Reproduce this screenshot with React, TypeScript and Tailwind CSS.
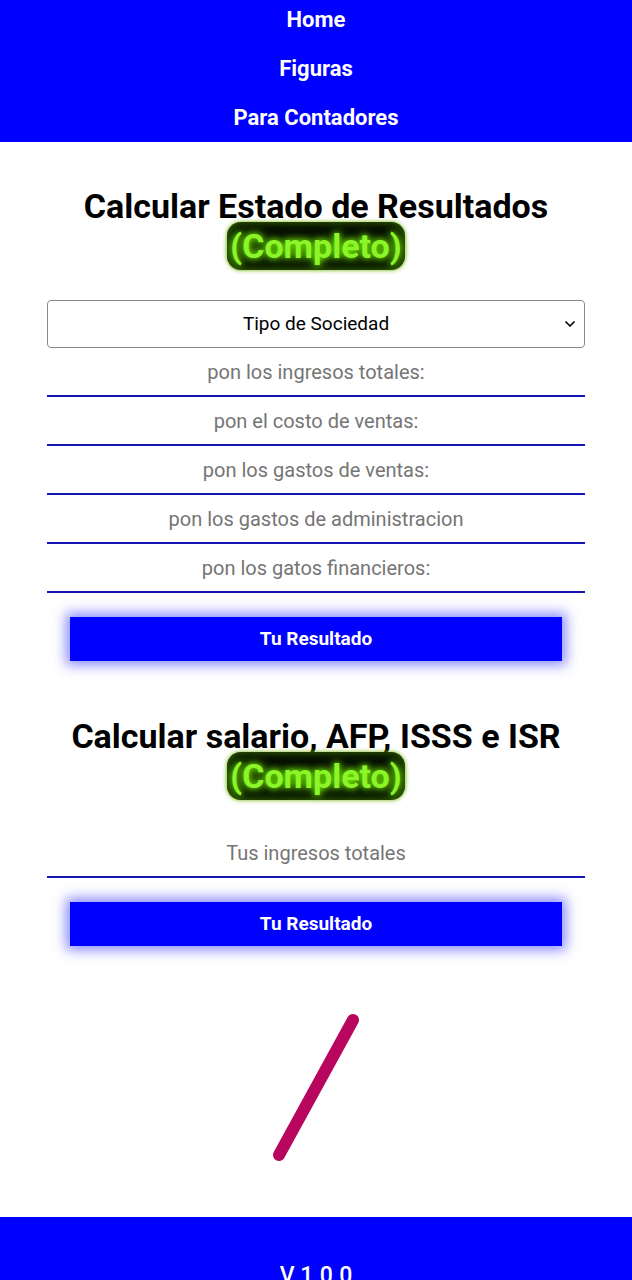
import { ChevronDown } from "lucide-react";

const fields = [
  "pon los ingresos totales:",
  "pon el costo de ventas:",
  "pon los gastos de ventas:",
  "pon los gastos de administracion",
  "pon los gatos financieros:",
];

function Badge() {
  return (
    <span className="rounded-[14px] bg-[#050a00] px-[3px] py-[4px] text-[#8cf52a] [text-shadow:0_0_6px_#7cff00,0_0_12px_#5fd000] shadow-[inset_0_0_10px_#3f7a00,0_0_4px_#6fb000]">
      (Completo)
    </span>
  );
}

function Field({ placeholder }: { placeholder: string }) {
  return (
    <input
      type="text"
      placeholder={placeholder}
      className="block h-[49px] w-full border-b-2 border-[#1414b4] bg-white text-center text-[20px] text-black outline-none placeholder:text-[#757575]"
    />
  );
}

function ResultButton() {
  return (
    <button
      type="button"
      className="mx-[23px] mt-6 block h-[44px] w-[492px] bg-[#0000ff] text-[19px] font-bold text-white shadow-[0_0_12px_4px_rgba(40,40,255,0.55)]"
    >
      Tu Resultado
    </button>
  );
}

export default function App() {
  return (
    <div className="flex min-h-screen flex-col bg-white font-['Roboto',sans-serif]">
      <nav className="flex flex-col items-center gap-[23px] bg-[#0000ff] pt-[7px] pb-[11px] text-[22px] font-bold leading-[26px] text-white">
        <a>Home</a>
        <a>Figuras</a>
        <a>Para Contadores</a>
      </nav>

      <main className="flex flex-col px-[47px]">
        <h1 className="mt-[44px] text-center text-[34px] font-bold leading-[40px] text-black">
          Calcular Estado de Resultados
          <br />
          <Badge />
        </h1>

        <div className="relative mt-[34px]">
          <select className="block h-[48px] w-full appearance-none rounded-[4px] border border-[#8a8a8a] bg-white text-center text-[19px] text-black [text-align-last:center] outline-none">
            <option>Tipo de Sociedad</option>
          </select>
          <ChevronDown
            className="pointer-events-none absolute right-[7px] top-[16px] h-4 w-4 text-black"
            strokeWidth={2.5}
          />
        </div>

        {fields.map((f) => (
          <Field key={f} placeholder={f} />
        ))}

        <ResultButton />

        <h1 className="mt-[55px] text-center text-[34px] font-bold leading-[40px] text-black">
          Calcular salario, AFP, ISSS e ISR
          <br />
          <Badge />
        </h1>

        <div className="mt-[33px]">
          <Field placeholder="Tus ingresos totales" />
        </div>

        <ResultButton />

        <div className="mt-[62px] mb-[49px] flex justify-center">
          <svg width="160" height="160" viewBox="-80 -80 160 160">
            <line
              x1="-37"
              y1="67"
              x2="37"
              y2="-68"
              stroke="#b8065e"
              strokeWidth="12"
              strokeLinecap="round"
            />
          </svg>
        </div>
      </main>

      <footer className="bg-[#0000ff] pt-[42px] pb-[40px] text-center text-[23px] font-medium text-white">
        V 1.0.0
      </footer>
    </div>
  );
}
